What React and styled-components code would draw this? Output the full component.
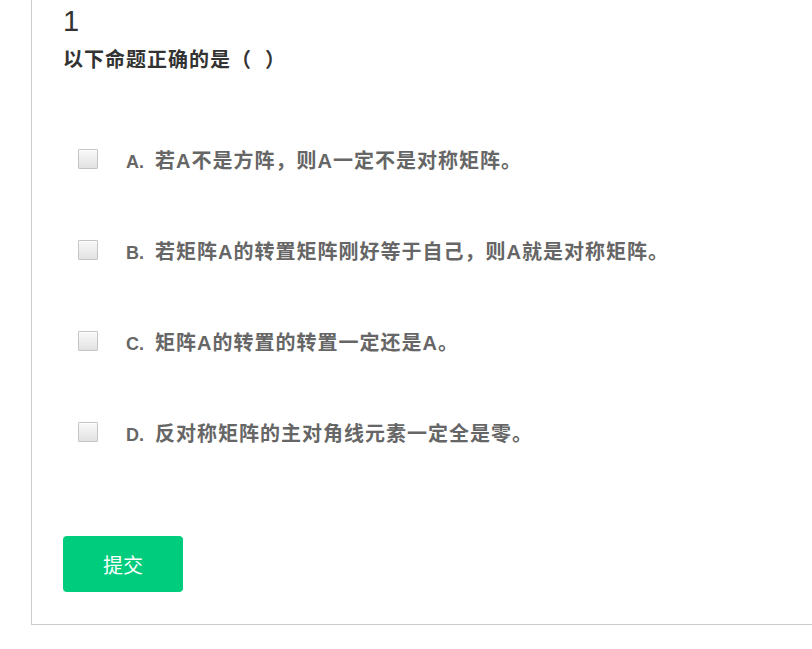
import React, { useState } from 'react';
import styled, { createGlobalStyle } from 'styled-components';

const GlobalStyle = createGlobalStyle`
  body {
    margin: 0;
    background: #fff;
    font-family: "Liberation Sans", "Noto Sans CJK SC", sans-serif;
  }
`;

const Panel = styled.div`
  margin-left: 31px;
  width: 900px;
  border-left: 1px solid #cccccc;
  border-bottom: 1px solid #cccccc;
  padding: 3px 0 32px 31px;
  box-sizing: border-box;
`;

const Number = styled.div`
  font-size: 29px;
  line-height: 36px;
  color: #333;
`;

const Question = styled.h3`
  margin: 6px 0 0;
  font-size: 20px;
  line-height: 30px;
  font-weight: bold;
  letter-spacing: 1px;
  color: #333;
  white-space: pre;
`;

const Options = styled.ul`
  list-style: none;
  margin: 39px 0 0;
  padding: 0;
`;

const Option = styled.li`
  display: flex;
  align-items: center;
  height: 91px;
  padding-left: 15px;
  cursor: pointer;
`;

const Box = styled.span`
  width: 18px;
  height: 18px;
  margin-top: -2px;
  border: 1px solid #c4c4c4;
  border-radius: 1px;
  background: linear-gradient(#f9f9f9, #e2e2e2);
  box-shadow: inset 0 1px 0 #fff;
  display: flex;
  align-items: center;
  justify-content: center;
  color: #00cc7e;
  font-size: 14px;
`;

const Label = styled.span`
  margin-left: 28px;
  font-size: 20px;
  font-weight: bold;
  letter-spacing: 1px;
  color: #666;
`;

const Letter = styled.span`
  display: inline-block;
  width: 29px;
  font-size: 18px;
  letter-spacing: 0;
`;

const Submit = styled.button`
  margin-top: 58px;
  width: 120px;
  height: 56px;
  border: none;
  border-radius: 4px;
  background: #00cc7e;
  color: #fff;
  font-family: inherit;
  font-size: 20px;
  cursor: pointer;
`;

const options = [
  { key: 'A', text: '若A不是方阵，则A一定不是对称矩阵。' },
  { key: 'B', text: '若矩阵A的转置矩阵刚好等于自己，则A就是对称矩阵。' },
  { key: 'C', text: '矩阵A的转置的转置一定还是A。' },
  { key: 'D', text: '反对称矩阵的主对角线元素一定全是零。' },
];

export default function App() {
  const [picked, setPicked] = useState([]);
  const toggle = (k) =>
    setPicked((p) => (p.includes(k) ? p.filter((x) => x !== k) : [...p, k]));

  return (
    <>
      <GlobalStyle />
      <Panel>
        <Number>1</Number>
        <Question>以下命题正确的是（  ）</Question>
        <Options>
          {options.map(({ key, text }) => (
            <Option key={key} onClick={() => toggle(key)}>
              <Box>{picked.includes(key) ? '✓' : ''}</Box>
              <Label>
                <Letter>{key}.</Letter>
                {text}
              </Label>
            </Option>
          ))}
        </Options>
        <Submit>提交</Submit>
      </Panel>
    </>
  );
}
